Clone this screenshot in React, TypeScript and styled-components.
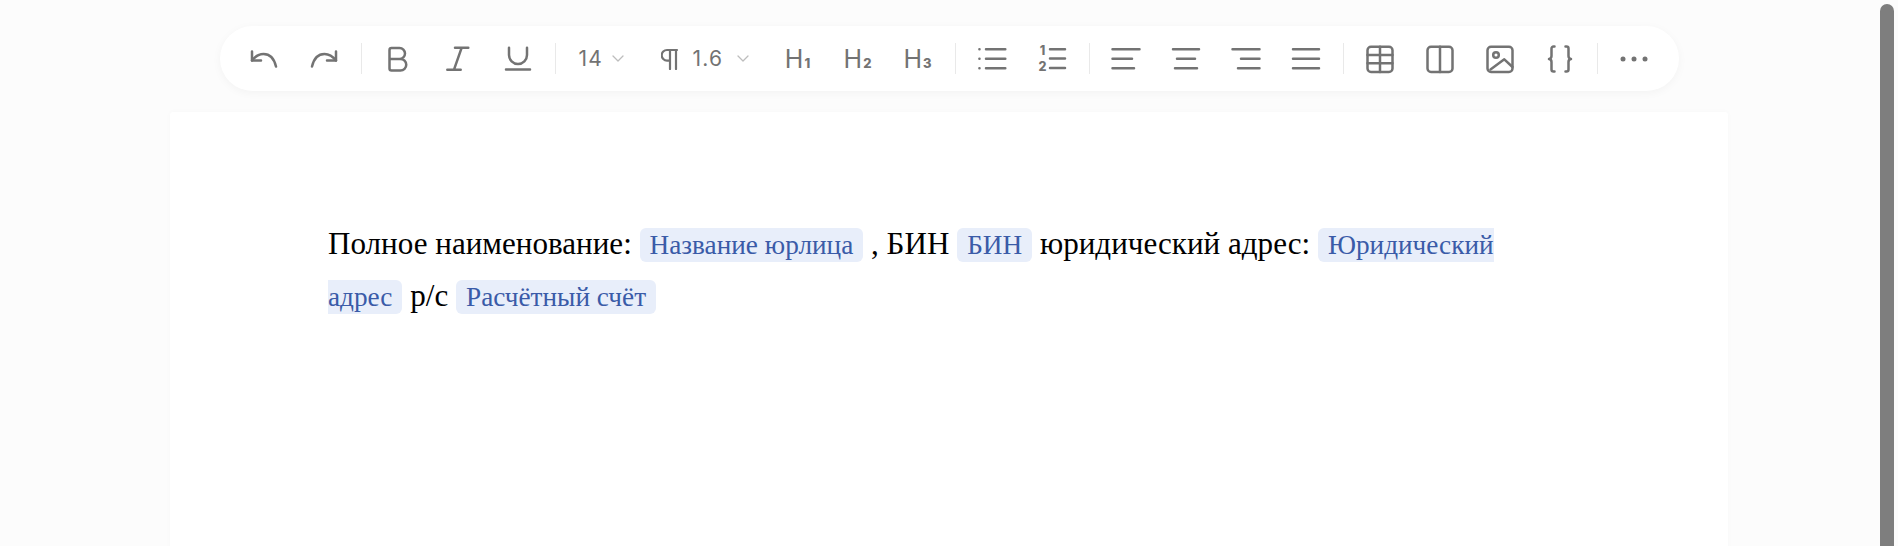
import React from "react";
import styled, { createGlobalStyle } from "styled-components";

const GlobalStyle = createGlobalStyle`
  html, body {
    margin: 0;
    padding: 0;
    height: 546px;
    overflow: hidden;
    background: #fcfcfc;
  }
`;

const Stroke: React.FC<{ children: React.ReactNode }> = ({ children }) => (
  <ToolIcon viewBox="0 0 30 30" fill="none" stroke="currentColor" strokeWidth="2.5" strokeLinecap="round" strokeLinejoin="round">
    {children}
  </ToolIcon>
);

const Undo = () => (
  <Stroke>
    <path d="M3 7.5v9h9" />
    <path d="M3 16.5C6.5 12 10 10 14.5 10c6 0 10.5 4 12.5 12.5" />
  </Stroke>
);

const Redo = () => (
  <Stroke>
    <path d="M27 7.5v9h-9" />
    <path d="M27 16.5C23.5 12 20 10 15.5 10 9.5 10 5 14 3 22.5" />
  </Stroke>
);

const Bold = () => (
  <Stroke>
    <path d="M6.5 15V6a2 2 0 0 1 2-2h8a5.5 5.5 0 0 1 0 11H6.5zm0 0v9.500a2 2 0 0 0 2 2h9a5.700 5.700 0 0 0 0-11.500" />
  </Stroke>
);

const Italic = () => (
  <Stroke>
    <path d="M12 3.700h13.300M4.300 25.700h13.400M18.700 3.700 11 25.700" />
  </Stroke>
);

const Underline = () => (
  <Stroke>
    <path d="M6 3.700V11a9 9 0 0 0 18 0V3.700M3 25.500h24" />
  </Stroke>
);

const BulletList = () => (
  <Stroke>
    <path d="M9 5.300h19.300M9 14.700h19.300M9 24.300h19.300" />
    <path d="M2.400 5.300h.1M2.400 14.700h.1M2.400 24.300h.1" />
  </Stroke>
);

const NumberList = () => (
  <Stroke>
    <path d="M13 5.300h15M13 14.500h15M13 24h15" />
    <ListDigit x="5.500" y="11">1</ListDigit>
    <ListDigit x="5.500" y="27">2</ListDigit>
  </Stroke>
);

const AlignLeft = () => (
  <Stroke>
    <path d="M1.500 5.300h27M1.500 14.700H21M1.500 24.300H23" />
  </Stroke>
);

const AlignCenter = () => (
  <Stroke>
    <path d="M2 5.300h26M6 14.700h18M4 24.300h22" />
  </Stroke>
);

const AlignRight = () => (
  <Stroke>
    <path d="M1.500 5.300h27M10 14.700h18.500M7 24.300h21.500" />
  </Stroke>
);

const AlignJustify = () => (
  <Stroke>
    <path d="M2 5.300h26M2 14.700h26M2 24.300h26" />
  </Stroke>
);

const TableIcon = () => (
  <Stroke>
    <rect x="2.500" y="2.800" width="25" height="25.200" rx="3.500" />
    <path d="M2.500 11h25M2.500 19.200h25M15 2.800v25.200" />
  </Stroke>
);

const ColumnsIcon = () => (
  <Stroke>
    <rect x="2.500" y="2.800" width="25" height="25.200" rx="3.500" />
    <path d="M15 2.800v25.200" />
  </Stroke>
);

const ImageIcon = () => (
  <Stroke>
    <rect x="2.500" y="2.800" width="25" height="25.200" rx="3.500" />
    <circle cx="11" cy="11" r="2.800" />
    <path d="M5.500 25.500 19.300 15.300 27.500 23" />
  </Stroke>
);

const Braces = () => (
  <Stroke>
    <path d="M9.500 2.500h-1a2 2 0 0 0-2 2V12a3 3 0 0 1-2.500 3 3 3 0 0 1 2.500 3v7.500a2 2 0 0 0 2 2h1" />
    <path d="M20.500 2.500h1a2 2 0 0 1 2 2V12a3 3 0 0 0 2.500 3 3 3 0 0 0-2.500 3v7.500a2 2 0 0 1-2 2h-1" />
  </Stroke>
);

const More = () => (
  <ToolIcon viewBox="0 0 30 30" fill="currentColor">
    <circle cx="4" cy="15" r="2.500" />
    <circle cx="15" cy="15" r="2.500" />
    <circle cx="26" cy="15" r="2.500" />
  </ToolIcon>
);

const Chevron = () => (
  <ChevronIcon viewBox="0 0 12 7" fill="none" stroke="currentColor" strokeWidth="1.300" strokeLinecap="round" strokeLinejoin="round">
    <path d="M1 1l5 5 5-5" />
  </ChevronIcon>
);

const Paragraph = () => (
  <ParagraphIcon viewBox="0 0 18 22" fill="none" stroke="currentColor" strokeWidth="2.200" strokeLinecap="round" strokeLinejoin="round">
    <path d="M16 2H6a5.300 5.300 0 0 0 0 10.600H9M9 2v19M15 2v19" />
  </ParagraphIcon>
);

const headings = ["1", "2", "3"];

export default function App() {
  return (
    <Page>
      <GlobalStyle />
      <Toolbar>
        <ToolButton><Undo /></ToolButton>
        <ToolButton><Redo /></ToolButton>
        <Divider />
        <ToolButton><Bold /></ToolButton>
        <ToolButton><Italic /></ToolButton>
        <ToolButton><Underline /></ToolButton>
        <Divider />
        <SizeSelect>
          <SelectValue>14</SelectValue>
          <Chevron />
        </SizeSelect>
        <LineSelect>
          <Paragraph />
          <SelectValue>1.6</SelectValue>
          <Chevron />
        </LineSelect>
        {headings.map((level) => (
          <ToolButton key={level}>
            <HeadingLetter>H</HeadingLetter>
            <HeadingLevel>{level}</HeadingLevel>
          </ToolButton>
        ))}
        <Divider />
        <ToolButton><BulletList /></ToolButton>
        <ToolButton><NumberList /></ToolButton>
        <Divider />
        <ToolButton><AlignLeft /></ToolButton>
        <ToolButton><AlignCenter /></ToolButton>
        <ToolButton><AlignRight /></ToolButton>
        <ToolButton><AlignJustify /></ToolButton>
        <Divider />
        <ToolButton><TableIcon /></ToolButton>
        <ToolButton><ColumnsIcon /></ToolButton>
        <ToolButton><ImageIcon /></ToolButton>
        <ToolButton><Braces /></ToolButton>
        <Divider />
        <ToolButton><More /></ToolButton>
      </Toolbar>
      <Sheet>
        <DocText>
          Полное наименование: <Field>Название юрлица</Field> , БИН <Field>БИН</Field> юридический адрес:{" "}
          <Field>Юридический адрес</Field> р/с <Field>Расчётный счёт</Field>
        </DocText>
      </Sheet>
      <ScrollThumb />
    </Page>
  );
}

const Page = styled.div`
  position: relative;
  height: 546px;
  overflow: hidden;
  display: flex;
  flex-direction: column;
  align-items: center;
  padding-top: 26px;
  box-sizing: border-box;
  background: #fcfcfc;
`;

const Toolbar = styled.div`
  flex: none;
  display: flex;
  align-items: center;
  height: 65px;
  padding: 0 15px 0 14px;
  border-radius: 33px;
  background: #fff;
  box-shadow: 0 2px 10px rgba(0, 0, 0, 0.04);
  color: #737373;
  font-family: Inter, "Noto Sans", sans-serif;
`;

const ToolButton = styled.div`
  flex: none;
  width: 60px;
  height: 40px;
  display: flex;
  align-items: baseline;
  justify-content: center;
  align-content: center;
  flex-wrap: wrap;
`;

const ToolIcon = styled.svg`
  width: 30px;
  height: 30px;
  display: block;
`;

const ListDigit = styled.text`
  font-family: Inter, sans-serif;
  font-size: 12.500px;
  font-weight: 800;
  text-anchor: middle;
  fill: currentColor;
  stroke: none;
`;

const Divider = styled.div`
  flex: none;
  width: 1px;
  height: 31px;
  margin: 0 6px 0 7px;
  background: #e9e9e9;
`;

const SizeSelect = styled.div`
  flex: none;
  width: 78px;
  box-sizing: border-box;
  padding-left: 17px;
  display: flex;
  align-items: center;
  gap: 9px;
`;

const LineSelect = styled.div`
  flex: none;
  width: 128px;
  box-sizing: border-box;
  padding-left: 21px;
  display: flex;
  align-items: center;
  gap: 14px;
`;

const SelectValue = styled.span`
  font-size: 21px;
  line-height: 24px;
  letter-spacing: 1.2px;
`;

const ChevronIcon = styled.svg`
  width: 12px;
  height: 7px;
  color: #bdbdbd;
  display: block;
`;

const ParagraphIcon = styled.svg`
  width: 18px;
  height: 22px;
  display: block;
`;

const HeadingLetter = styled.span`
  font-size: 25px;
  line-height: 30px;
  font-weight: 400;
`;

const HeadingLevel = styled.span`
  margin-left: 1px;
  font-size: 13px;
  line-height: 14px;
  font-weight: 800;
`;

const Sheet = styled.div`
  flex: none;
  width: 1558px;
  height: 600px;
  margin-top: 21px;
  box-sizing: border-box;
  padding: 107px 175px 0 158px;
  background: #fff;
  border-radius: 3px;
  box-shadow: 0 0 6px rgba(0, 0, 0, 0.025);
`;

const DocText = styled.p`
  margin: 0;
  font-family: "Liberation Serif", serif;
  font-size: 31.100px;
  line-height: 49.500px;
  color: #000;
`;

const Field = styled.span`
  padding: 2px 10px;
  border-radius: 6px;
  background: #e8eefa;
  color: #3a5ba8;
  font-size: 27.250px;
`;

const ScrollThumb = styled.div`
  position: absolute;
  top: 4px;
  right: 4px;
  bottom: -10px;
  width: 14px;
  border-radius: 7px;
  background: #7e7e7e;
`;
